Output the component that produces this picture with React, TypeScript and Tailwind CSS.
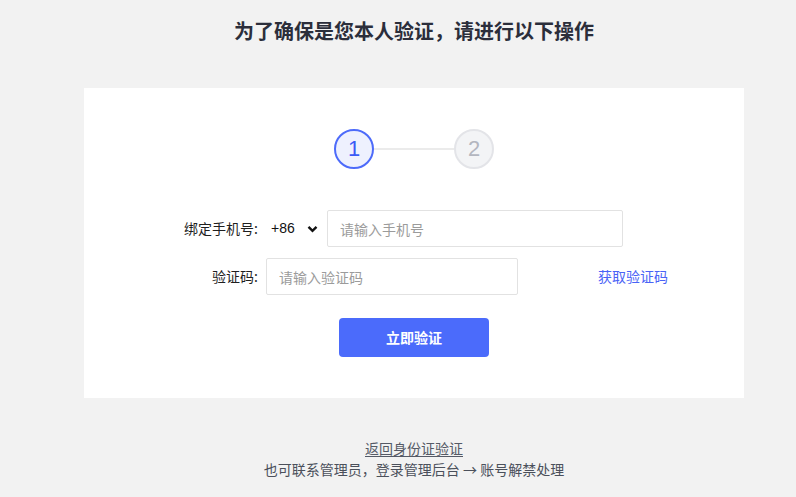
import React from 'react';

const FONT = '"Noto Sans CJK SC", "Noto Sans", "Liberation Sans", sans-serif';
const NUM_FONT = '"Liberation Sans", Arial, sans-serif';

const Steps: React.FC = () => (
  <div className="flex items-center justify-center">
    <div
      className="w-10 h-10 rounded-full border-2 border-[#4d6bfa] bg-[#eef1fe] flex items-center justify-center text-[22px] text-[#3a5af5] leading-none"
      style={{ fontFamily: NUM_FONT }}
    >
      1
    </div>
    <div className="w-[80px] h-[2px] bg-[#ebebeb]"></div>
    <div
      className="w-10 h-10 rounded-full border-2 border-[#e3e4e8] bg-[#f3f4f6] flex items-center justify-center text-[22px] text-[#b3b6bf] leading-none"
      style={{ fontFamily: NUM_FONT }}
    >
      2
    </div>
  </div>
);

const App: React.FC = () => {
  return (
    <div className="min-h-screen bg-[#f2f2f2]" style={{ fontFamily: FONT }}>
      <div className="w-[660px] ml-[84px] flex flex-col">
        <h1 className="pt-[18px] h-[88px] text-center text-[20px] leading-[26px] font-bold text-[#2b2e3b]">
          为了确保是您本人验证，请进行以下操作
        </h1>

        <div className="bg-white pt-[41px] pb-[41px] flex flex-col">
          <Steps />

          {/* phone row */}
          <div className="flex items-center mt-[41px]">
            <div className="w-[174px] text-right text-[14px] text-[#1f1f1f]">绑定手机号:</div>
            <div className="ml-2 w-[56px] flex items-center pl-[5px] gap-[12px] text-[14px] text-[#111]" style={{ fontFamily: NUM_FONT }}>
              <span>+86</span>
              <svg width="11" height="8" viewBox="0 0 11 8">
                <path d="M1.5 1.8 L5.5 5.8 L9.5 1.8" fill="none" stroke="#111" strokeWidth="2.4" />
              </svg>
            </div>
            <input
              placeholder="请输入手机号"
              className="ml-[5px] w-[296px] h-[37px] border border-[#e2e2e2] rounded-[2px] px-3 text-[14px] text-[#333] placeholder:text-[#9b9b9b] outline-none"
            />
          </div>

          {/* code row */}
          <div className="flex items-center mt-[11px]">
            <div className="w-[174px] text-right text-[14px] text-[#1f1f1f]">验证码:</div>
            <input
              placeholder="请输入验证码"
              className="ml-2 w-[252px] h-[37px] border border-[#e2e2e2] rounded-[2px] px-3 text-[14px] text-[#333] placeholder:text-[#9b9b9b] outline-none"
            />
            <a className="ml-[80px] text-[14px] text-[#4a63f6] cursor-pointer">获取验证码</a>
          </div>

          <div className="flex justify-center mt-[23px]">
            <button className="w-[150px] h-[39px] rounded-[4px] bg-[#4b6bfb] text-white text-[14px] font-bold">
              立即验证
            </button>
          </div>
        </div>

        <div className="mt-[40px] flex flex-col items-center text-[14px] leading-[21px]">
          <a className="text-[#555a66] underline underline-offset-2 cursor-pointer">返回身份证验证</a>
          <p className="text-[#4b505b]">也可联系管理员，登录管理后台 → 账号解禁处理</p>
        </div>
      </div>
    </div>
  );
};

export default App;
